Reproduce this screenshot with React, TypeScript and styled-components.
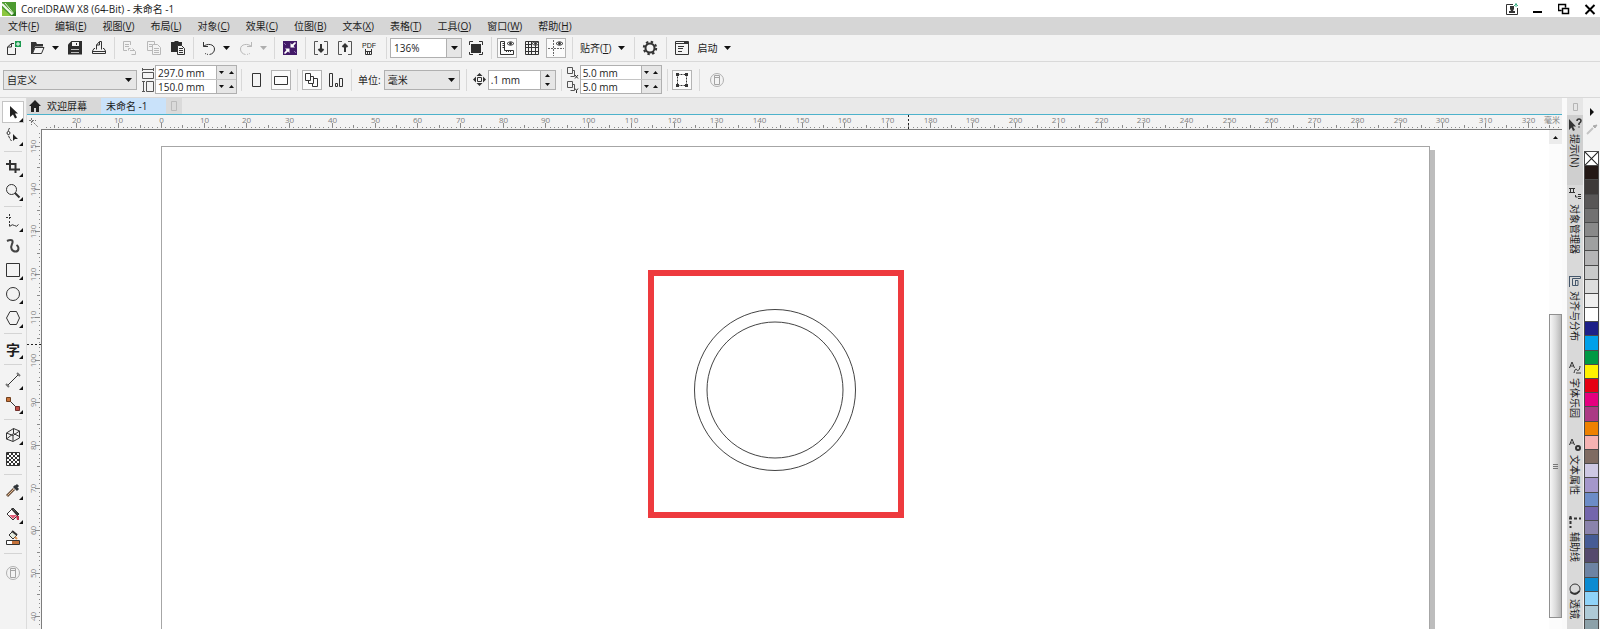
import React, { useLayoutEffect, useRef, useState } from "react";
import styled, { createGlobalStyle, css } from "styled-components";

const GlobalStyle = createGlobalStyle`
  * { box-sizing: border-box; }
  body {
    margin: 0;
    background: #f3f3f3;
    color: #1c1c1c;
    font: 10px/14px "Open Sans", "Noto Sans CJK SC", sans-serif;
  }
  button, input, select { font: inherit; color: inherit; margin: 0; padding: 0; }
  button { background: none; border: 0; }
  svg { display: block; flex: none; }
`;

/* ---------- shell ---------- */

const Shell = styled.div`
  display: flex;
  flex-direction: column;
  height: 100vh;
  overflow: hidden;
`;

const TitleBar = styled.header`
  display: flex;
  align-items: center;
  height: 17px;
  flex: none;
  padding: 0 4px 0 2px;
  background: #fff;
`;

const Title = styled.h1`
  flex: 1;
  margin: 0 0 0 5px;
  font-size: 10px;
  font-weight: 400;
`;

const WindowButtons = styled.div`
  display: flex;
  gap: 14px;
`;

const WindowButton = styled.button`
  display: flex;
  width: 12px;
  height: 14px;
  align-items: center;
  justify-content: center;
`;

const MenuBar = styled.nav`
  display: flex;
  height: 18px;
  flex: none;
  background: #d6d6d6;
`;

const MenuItem = styled.button`
  padding: 0 8px;
  white-space: nowrap;
`;

const Bar = styled.div<{ $height: number }>`
  display: flex;
  align-items: center;
  flex: none;
  height: ${(p) => p.$height}px;
  background: #f3f3f3;
  border-bottom: 1px solid #d9d9d9;
`;

const Divider = styled.span`
  width: 1px;
  height: 22px;
  flex: none;
  margin: 0 3px;
  background: #d8d8d8;
`;

const ToolButton = styled.button<{ $active?: boolean; $width?: number }>`
  display: flex;
  align-items: center;
  justify-content: center;
  flex: none;
  width: ${(p) => p.$width ?? 24}px;
  height: 20px;
  opacity: ${(p) => (p.disabled ? 0.3 : 1)};
  ${(p) =>
    p.$active &&
    css`
      background: #fbfbfb;
      border: 1px solid #b4b4b4;
    `}
`;

const TextButton = styled(ToolButton)`
  width: auto;
  gap: 7px;
  padding: 0 4px;
  white-space: nowrap;
`;

/* ---------- fields ---------- */

const SelectBox = styled.span<{ $width: number; $white?: boolean }>`
  display: grid;
  grid-template-columns: 1fr 15px;
  align-items: center;
  flex: none;
  width: ${(p) => p.$width}px;
  height: 20px;
  border: 1px solid #b0b0b0;
  background: ${(p) => (p.$white ? "#fff" : "#e6e6e6")};
  select {
    grid-area: 1 / 1 / 2 / 3;
    width: 100%;
    height: 18px;
    padding-left: 3px;
    appearance: none;
    border: 0;
    background: none;
  }
  svg {
    grid-area: 1 / 2;
    justify-self: center;
    pointer-events: none;
  }
`;

const ZoomArrow = styled.span`
  grid-area: 1 / 2;
  display: flex;
  align-items: center;
  justify-content: center;
  height: 18px;
  border-left: 1px solid #b0b0b0;
  background: #e6e6e6;
  pointer-events: none;
`;

const FieldStack = styled.div`
  display: flex;
  flex-direction: column;
  flex: none;
  border: 1px solid #b0b0b0;
`;

const FieldRow = styled.div`
  display: flex;
  height: 13px;
  & + & { border-top: 1px solid #c4c4c4; height: 14px; }
`;

const NumberInput = styled.input<{ $width: number }>`
  width: ${(p) => p.$width}px;
  height: 100%;
  padding-left: 2px;
  border: 0;
  background: #fff;
  outline: 0;
`;

const Spinner = styled.span<{ $vertical?: boolean }>`
  display: flex;
  flex-direction: ${(p) => (p.$vertical ? "column" : "row")};
  width: ${(p) => (p.$vertical ? 15 : 20)}px;
  border-left: 1px solid #b0b0b0;
  background: #e6e6e6;
  button {
    display: flex;
    flex: 1;
    align-items: center;
    justify-content: center;
  }
`;

const NudgeField = styled.div`
  display: flex;
  flex: none;
  height: 20px;
  border: 1px solid #b0b0b0;
`;

const IconStack = styled.span`
  display: flex;
  flex-direction: column;
  gap: 2px;
  flex: none;
  margin-right: 1px;
`;

const UnitLabel = styled.label`
  display: flex;
  align-items: center;
  gap: 3px;
  margin-left: 3px;
  white-space: nowrap;
`;

/* ---------- work area ---------- */

const Body = styled.div`
  display: flex;
  flex: 1;
  min-height: 0;
`;

const Toolbox = styled.aside`
  display: flex;
  flex-direction: column;
  align-items: center;
  flex: none;
  width: 26px;
  padding: 2px 0;
`;

const Tool = styled.button<{ $active?: boolean }>`
  position: relative;
  display: flex;
  align-items: center;
  justify-content: center;
  flex: none;
  width: 20px;
  height: 20px;
  margin: 2px 0;
  outline: ${(p) => (p.$active ? "1px solid #c4c4c4" : "0")};
  background: ${(p) => (p.$active ? "#fff" : "none")};
`;

const Flyout = styled.span`
  position: absolute;
  right: 0;
  bottom: 0;
  border: 2px solid #111;
  border-top-color: transparent;
  border-left-color: transparent;
`;

const ToolDivider = styled.span`
  width: 18px;
  height: 1px;
  margin: 3px 0;
  flex: none;
  background: #d4d4d4;
`;

const AddTool = styled.button`
  display: flex;
  flex: none;
  align-items: center;
  height: 32px;
`;

const Workspace = styled.main`
  display: flex;
  flex: 1;
  flex-direction: column;
  min-width: 0;
  border-left: 1px solid #dcdcdc;
`;

const Tabs = styled.div`
  display: flex;
  flex: none;
  height: 17px;
  background: #e9e9e9;
  border-bottom: 1px solid #4db2cb;
`;

const Tab = styled.button<{ $active?: boolean }>`
  display: flex;
  align-items: center;
  gap: 6px;
  padding: 0 ${(p) => (p.$active ? 18 : 14)}px 0 ${(p) => (p.$active ? 5 : 2)}px;
  background: ${(p) => (p.$active ? "#c9e2fa" : "#d8d8d8")};
  white-space: nowrap;
`;

const NewTab = styled.button`
  display: flex;
  align-items: center;
  justify-content: center;
  width: 16px;
  background: #dadada;
`;

const Desk = styled.div`
  display: grid;
  flex: 1;
  grid-template-columns: 14px 1fr 13px;
  grid-template-rows: 15px 1fr;
  min-height: 0;
`;

const Corner = styled.span`
  display: flex;
  align-items: center;
  justify-content: center;
`;

const RulerTop = styled.div`
  grid-column: 2 / 4;
  overflow: hidden;
  border-bottom: 1px solid #7d7d7d;
`;

const RulerLeft = styled.div`
  min-height: 0;
  overflow: hidden;
`;

const RulerSvg = styled.svg`
  font-size: 8px;
  fill: #808080;
  line { stroke: #8a8a8a; shape-rendering: crispEdges; }
`;

const Canvas = styled.div`
  position: relative;
  overflow: hidden;
  background: #fff;
  border-left: 1px solid #7d7d7d;
`;

const Page = styled.div`
  position: absolute;
  left: 119px;
  top: 16px;
  width: 1269px;
  height: 641px;
  background: #fff;
  border: 1px solid #a6a6a6;
  box-shadow: 5px 4px 0 #bdbdbd;
`;

const Highlight = styled.div`
  position: absolute;
  left: 606px;
  top: 140px;
  width: 256px;
  height: 248px;
  border: 6px solid #ee3a3e;
`;

const Rings = styled.svg`
  position: absolute;
  left: 651px;
  top: 178px;
`;

const ScrollTrack = styled.div`
  display: flex;
  flex-direction: column;
  padding-bottom: 11px;
  background: #fcfcfc;
`;

const ScrollUp = styled.button`
  display: flex;
  align-items: center;
  justify-content: center;
  height: 14px;
  margin-bottom: 170px;
  background: #ececec;
`;

const ScrollThumb = styled.div`
  display: flex;
  flex: 1;
  align-items: center;
  justify-content: center;
  border: 1px solid #909090;
  background: linear-gradient(90deg, #f6f6f6, #dcdcdc 50%, #b9b9b9);
`;

/* ---------- right side ---------- */

const Dockers = styled.aside`
  display: flex;
  flex-direction: column;
  flex: none;
  width: 21px;
  overflow: hidden;
  border-left: 5px solid #fafafa;
  background: #d9d9d9;
`;

const DockerAdd = styled.button`
  display: flex;
  flex: none;
  align-items: center;
  justify-content: center;
  height: 17px;
  background: #e6e6e6;
`;

const DockerTab = styled.button<{ $active?: boolean }>`
  display: flex;
  flex: none;
  align-items: center;
  gap: 3px;
  width: 16px;
  padding: 2px 0 18px;
  writing-mode: vertical-rl;
  text-orientation: sideways;
  white-space: nowrap;
  background: ${(p) => (p.$active ? "#cfcfcf" : "#d9d9d9")};
`;

const Palette = styled.aside`
  display: flex;
  flex-direction: column;
  flex: none;
  width: 17px;
  padding: 0 1px;
`;

const PaletteHead = styled.div`
  display: flex;
  flex-direction: column;
  align-items: center;
  flex: none;
  gap: 7px;
  height: 53px;
  padding-top: 10px;
`;

const Swatch = styled.button<{ $color: string }>`
  flex: 1;
  min-height: 0;
  border: 1px solid #4a4a4a;
  border-bottom: 0;
  background: ${(p) => p.$color};
  &:last-child { flex: 0 0 10px; }
  svg { width: 100%; height: 100%; }
`;

/* ---------- icons ---------- */

type IconProps = { w?: number; h?: number; children: React.ReactNode };
const Icon = ({ w = 16, h = 16, children }: IconProps) => (
  <svg width={w} height={h} viewBox={`0 0 ${w} ${h}`} fill="none" stroke="#333" aria-hidden="true">
    {children}
  </svg>
);

const Down = () => (
  <svg width="7" height="4" viewBox="0 0 7 4" aria-hidden="true"><path d="M0 0h7L3.500 4z" fill="#111" /></svg>
);
const TinyDown = () => (
  <svg width="5" height="3" viewBox="0 0 5 3" aria-hidden="true"><path d="M0 0h5L2.500 3z" fill="#111" /></svg>
);
const TinyUp = () => (
  <svg width="5" height="3" viewBox="0 0 5 3" aria-hidden="true"><path d="M0 3h5L2.500 0z" fill="#111" /></svg>
);

const Logo = () => (
  <Icon w={14} h={14}>
    <path d="M0 0h14v14H0z" fill="#4d9b31" stroke="none" />
    <path d="M0 6l9 8H0z" fill="#8cc63f" stroke="none" />
    <path d="M0 2l12 12" stroke="#f4faef" strokeWidth="2" />
    <path d="M3 1l9 11" stroke="#e4f2d8" />
    <path d="M14 9v5H9z" fill="#2f7d20" stroke="none" />
  </Icon>
);

const NewIcon = () => (
  <Icon>
    <path d="M8 3.500H5.500L1.500 7v7.500h8V8M5.500 3.500V7h-4" />
    <path d="M9 1h6v6H9z" fill="#1d9a50" stroke="none" />
    <path d="M12 2v4M10 4h4" stroke="#fff" />
  </Icon>
);
const OpenIcon = () => (
  <Icon>
    <path d="M2.500 13.500L5 7.500h9L11.500 13.500z" />
    <path d="M1 2h5l1 2h6v2.500H5L2.500 14H1z" fill="#333" stroke="none" />
  </Icon>
);
const SaveIcon = () => (
  <Icon>
    <path d="M4.500 1H15v13.500H1v-10z" fill="#2d2d2d" stroke="none" />
    <path d="M5 2h7v4H5z" fill="#f3f3f3" stroke="none" />
    <path d="M9.500 3v2" />
    <path d="M4 9.500h8M4 12.500h8" stroke="#bbb" />
  </Icon>
);
const PrintIcon = () => (
  <Icon>
    <path d="M5.500 9.500V5l3-3.500h2v8M8.500 2v3h-3M4 8.500H3L1.500 11v2.500h13V11L13 8.500h-1M2 11.500h12" />
  </Icon>
);
const CutIcon = () => (
  <Icon>
    <path d="M8.500 5V1.500h-7v9H5M3 4.500h4M3 6.500h4M8.500 8.500h-2v2M8 10.500h4M10.500 8.500l3 3v3h-4" />
  </Icon>
);
const CopyIcon = () => (
  <Icon>
    <path d="M6 10.500H1.500v-9h7V4M3 4.500h3M3 6.500h3M6.500 4.500h5l3 3v7h-8zM8 8.500h5M8 10.500h5M8 12.500h5" />
  </Icon>
);
const PasteIcon = () => (
  <Icon>
    <path d="M1 2h3l1-1h3l1 1h3v10H1z" fill="#2d2d2d" stroke="none" />
    <path d="M7.500 5.500h4l3 3v6h-7z" fill="#f3f3f3" />
    <path d="M9 8.500h4M9 10.500h4M9 12.500h4" />
  </Icon>
);
const UndoIcon = ({ flip }: { flip?: boolean }) => (
  <Icon>
    <g transform={flip ? "matrix(-1 0 0 1 16 0)" : undefined}>
      <path d="M2.500 6.500C6 3 13.500 4 13.500 9c0 3-2 5-5 5.500" />
      <path d="M7 14.500l-3-1" strokeDasharray="1 1" />
      <path d="M2.500 2v4.500H7" />
    </g>
  </Icon>
);
const SearchContentIcon = () => (
  <Icon>
    <path d="M1 1h14v14H1z" fill="#431a68" stroke="none" />
    <path d="M8.500 7.500V3l1.500 1.500L13 2l1 1-2.500 3L13 7.500zM7.500 8.500V13L6 11.500 3 14l-1-1 2.500-3L3 8.500z" fill="#fff" stroke="none" />
    <path d="M2 3l2 2M12 11l2 2" stroke="#8d6bb0" />
  </Icon>
);
const ImportIcon = ({ up }: { up?: boolean }) => (
  <Icon>
    <path d="M5 1.500H1.500v13H5M11 1.500h3.500v13H11" stroke="#555" />
    <path d={up ? "M8 12V5M5.500 7L8 4.500 10.500 7" : "M8 4v7M5.500 9L8 11.500 10.500 9"} strokeWidth="2" />
  </Icon>
);
const PdfMark = styled.span`
  display: flex;
  flex-direction: column;
  align-items: center;
  font: 7px/7px "Liberation Sans", sans-serif;
`;
const FullScreenIcon = () => (
  <Icon>
    <path d="M3 4h10v9H3z" fill="#2d2d2d" stroke="none" />
    <path d="M1.500 5V1.500H5M11 1.500h3.500V5M14.500 12v2.500H11M5 14.500H1.500V12" />
  </Icon>
);
const Eye = () => (
  <>
    <path d="M8 3.500Q11.500 0 15 3.500 11.500 7 8 3.500z" fill="#fff" />
    <circle cx="11.500" cy="3.500" r="1" fill="#333" />
  </>
);
const RulersIcon = () => (
  <Icon>
    <path d="M1.500 1.500h4v9h9v4h-13zM3.500 3.500h2M3.500 5.500h2M3.500 7.500h2M7.500 12v-2M9.500 12v-2M11.500 12v-2" />
    <Eye />
  </Icon>
);
const GridIcon = () => (
  <Icon>
    <path d="M1.500 1.500h13v13h-13zM4.500 1v14M7.500 1v14M11.500 5v10M1 4.500h7M1 7.500h14M1 11.500h14" />
    <Eye />
  </Icon>
);
const GuidesIcon = () => (
  <Icon>
    <path d="M0 8.500h16M5.500 0v16" stroke="#666" strokeDasharray="2 1" />
    <Eye />
  </Icon>
);
const GearIcon = () => (
  <Icon>
    <circle cx="8" cy="8" r="4.500" strokeWidth="2" />
    <circle cx="8" cy="8" r="6.200" strokeWidth="2" strokeDasharray="2.400 2.470" />
  </Icon>
);
const LaunchIcon = () => (
  <Icon>
    <path d="M1.500 1.500h13v13h-13zM2 3.500h12M4 6.500h6M4 8.500h5M4 11.500h4M10 2.500h4" />
  </Icon>
);
const WidthIcon = () => (
  <Icon w={12} h={11}><path d="M.5 1.500h11M.5 0v3M11.500 0v3M.5 4.500h11v6H.5z" stroke="#555" /></Icon>
);
const HeightIcon = () => (
  <Icon w={12} h={11}><path d="M1.500.5v10M0 .5h3M0 10.500h3M4.500.5h7v10h-7z" stroke="#555" /></Icon>
);
const PortraitIcon = () => <Icon><path d="M3.500 1.500h8v13h-8z" /></Icon>;
const LandscapeIcon = () => <Icon><path d="M1.500 4.500h13v8h-13z" /></Icon>;
const PagesIcon = () => (
  <Icon><path d="M1.500 1.500h5v7h-5zM6.500 4.500h3v7h-5v-3M9.500 6.500h4v8h-5v-3" /></Icon>
);
const CurrentPageIcon = () => (
  <Icon><path d="M1.500 1.500h3v13h-3zM7.500 11.500h2v3h-2zM11.500 6.500h3v8h-3z" /></Icon>
);
const NudgeIcon = () => (
  <Icon w={13} h={13}>
    <path d="M4.500 4.500h4v4h-4z" />
    <path d="M6.500 0l3 3h-6zM6.500 13l3-3h-6zM0 6.500l3-3v6zM13 6.500l-3-3v6z" fill="#333" stroke="none" />
  </Icon>
);
const DuplicateIcon = ({ axis }: { axis: "x" | "y" }) => (
  <Icon w={12} h={12}>
    <path d="M.5.5h5v6h-5zM5.500 3.500h2v6h-4" stroke="#555" />
    <path d={axis === "x" ? "M8 8l3 3.500M11 8l-3 3.500" : "M8 7.500l1.500 2 1.500-2M9.500 9.500V12"} />
  </Icon>
);
const TreatFilledIcon = () => (
  <Icon>
    <path d="M3.500 2.500h9v11h-9z" strokeDasharray="2 1" />
    <path d="M2 1h3v3H2zM11 1h3v3h-3zM2 12h3v3H2zM11 12h3v3h-3z" fill="#333" stroke="none" />
  </Icon>
);
const AddCircleIcon = () => (
  <Icon>
    <circle cx="8" cy="8" r="6.500" stroke="#b0b0b0" />
    <path d="M5.500 3.500h5v9h-5zM5.500 5.500h5" stroke="#a4a4a4" />
  </Icon>
);

const toolIcons: Record<string, React.ReactNode> = {
  pick: <path d="M5 2v11l3-2.500 2 4 2-1-2-4h3z" fill="#222" stroke="none" />,
  shape: (
    <>
      <path d="M4.500 0c-3 5-1 9 2 13" strokeDasharray="3 1" />
      <circle cx="3.500" cy="5" r="1.500" fill="#fff" />
      <path d="M8 6v7l2-2h3z" fill="#222" stroke="none" />
    </>
  ),
  crop: <path d="M1 5h9.500v9M5 1v9.500h10" strokeWidth="2" />,
  zoom: <><circle cx="6.500" cy="6.500" r="5" /><path d="M10 10l4.500 4.500" strokeWidth="2" /></>,
  freehand: (
    <>
      <path d="M4.500 0v6M1 3.500h6M4.500 7v5" strokeDasharray="2 1" />
      <path d="M4.500 12.500q3-3 5-1t4-1" />
    </>
  ),
  artistic: <path d="M2 3c4-2 7-1 5 3s0 7.500 3.500 7.500 4-4.500 1-6.500" strokeWidth="2" stroke="#444" />,
  rectangle: <path d="M1.500 1.500h13v13h-13z" />,
  ellipse: <circle cx="8" cy="8" r="6.500" />,
  polygon: <path d="M5 1.500h6.500l3 6.500-3 6.500H5L1.500 8z" />,
  line: (
    <>
      <path d="M3 13L13 3" />
      <path d="M1 12l3 3M12 1l3 3" strokeWidth="2" stroke="#777" />
    </>
  ),
  connector: (
    <>
      <path d="M3 3l10 10" />
      <path d="M1.500 1.500h4v4h-4z" fill="#c9743a" stroke="#70401e" />
      <path d="M10.500 10.500h4v4h-4z" fill="#c0504a" stroke="#70302c" />
    </>
  ),
  extrude: <path d="M1.500 6l7-4.500 6 2.500v7L8 14.500 1.500 12zM1.500 6L8 8.500V14M8 8.500L14.500 4M8.500 1.500v5L1.500 12M8.500 6.500l6 3" />,
  transparency: (
    <>
      <path d="M1.500 1.500h13v13h-13z" fill="#fff" />
      {[0, 1, 2, 3, 4, 5].map((row) => (
        <path key={row} d={`M${row % 2 ? 4 : 2} ${3 + row * 2}H14`} strokeWidth="2" strokeDasharray="2 2" />
      ))}
    </>
  ),
  dropper: (
    <>
      <path d="M2 14l7-7" strokeWidth="3" stroke="#6b5340" />
      <path d="M2.500 13.500L9 7" stroke="#e8bd94" />
      <path d="M9 4l4 4M11 5l2-2" strokeWidth="3" stroke="#2f3438" />
    </>
  ),
  fill: (
    <>
      <path d="M2 8l6-6 6 6-6 6z" fill="#fff" />
      <path d="M7 2l7 6-2 2-6-7z" fill="#333" stroke="none" />
      <path d="M4 9h8l-4 4z" fill="#e2607a" stroke="none" />
      <path d="M11 10h3v4h-2z" fill="#c0334d" stroke="none" />
    </>
  ),
  smart: (
    <>
      <path d="M4 5l4-4 4 4-4 4z" fill="#e5ece0" />
      <path d="M7 1l5 4" strokeWidth="2" />
      <path d="M10 7l2 2" stroke="#dd9552" strokeWidth="2" />
      <path d="M1.500 10.500h13v4h-13z" fill="#fff" />
      <path d="M7 11h7v3H7z" fill="#c5723b" stroke="none" />
    </>
  ),
};

const TextGlyph = styled.span`
  font: 700 14px/16px "Noto Sans CJK SC", sans-serif;
`;

const toolGroups: { id: string; label: string; fly?: boolean }[][] = [
  [{ id: "pick", label: "选择", fly: true }, { id: "shape", label: "形状", fly: true }],
  [{ id: "crop", label: "裁剪", fly: true }, { id: "zoom", label: "缩放", fly: true }],
  [
    { id: "freehand", label: "手绘", fly: true },
    { id: "artistic", label: "艺术笔" },
    { id: "rectangle", label: "矩形", fly: true },
    { id: "ellipse", label: "椭圆形", fly: true },
    { id: "polygon", label: "多边形", fly: true },
  ],
  [{ id: "text", label: "文本", fly: true }],
  [{ id: "line", label: "平行度量", fly: true }, { id: "connector", label: "连接器", fly: true }],
  [{ id: "extrude", label: "立体化", fly: true }, { id: "transparency", label: "透明度" }],
  [
    { id: "dropper", label: "颜色滴管", fly: true },
    { id: "fill", label: "交互式填充", fly: true },
    { id: "smart", label: "智能填充" },
  ],
];

const dockers: { label: string; icon: React.ReactNode }[] = [
  {
    label: "提示(N)",
    icon: (
      <>
        <path d="M1 2v11l2.500-2.500L5 14l2-1-2-3.500h3z" fill="#333" stroke="none" />
        <path d="M9 4q0-2 2-2t2 2q0 1-2 2.500V8M11 9.500v1" strokeWidth="1.500" />
      </>
    ),
  },
  {
    label: "对象管理器",
    icon: <path d="M1 1.500h6M1 5.500h6M2.500 1v5M5.500 1v5M7.500 8v2h2M10 7.500h3M10 9.500h3M10 11.500h3" />,
  },
  { label: "对齐与分布", icon: <path d="M1.500 2v11M1 2.500h11.500v2H4.500v7h3V6M8 6.500h2v5H7" stroke="#45576b" /> },
  { label: "字体乐园", icon: <path d="M1.500 7L4 1l2.500 6M2.500 5h3M6 12c1-4 2-5 3-3s3-1 3-4M8 12h5" /> },
  {
    label: "文本属性",
    icon: <><path d="M1.500 7L4 1l2.500 6M2.500 5h3" /><circle cx="10" cy="10" r="2" strokeWidth="2" /></>,
  },
  { label: "辅助线", icon: <path d="M2.500 1v12M1 3.500h12" strokeWidth="2" strokeDasharray="3 2" /> },
  { label: "透镜", icon: <><circle cx="7" cy="7" r="5" /><path d="M2.500 10q5 4 9-1" strokeWidth="2" /></> },
];

const swatches = [
  "#fff", "#231815", "#3e3a39", "#595757", "#727171", "#898989", "#9fa0a0", "#b5b5b6", "#c9caca",
  "#dcdddd", "#efefef", "#ffffff", "#1d2088", "#00a0e9", "#009944", "#fff100", "#e60012", "#e4007f",
  "#ab3a84", "#ee8100", "#f5b2b2", "#7f6b62", "#cdc8e3", "#a497cb", "#6c8cc7", "#7466ac", "#8a83ac",
  "#465c95", "#554a6d", "#6d83a3", "#0b8bd2", "#8fd3f8", "#aecad6", "#8ca1a9",
];

const menus = [
  ["文件", "F"], ["编辑", "E"], ["视图", "V"], ["布局", "L"], ["对象", "C"], ["效果", "C"],
  ["位图", "B"], ["文本", "X"], ["表格", "T"], ["工具", "O"], ["窗口", "W"], ["帮助", "H"],
];

/* ---------- rulers ---------- */

const PX_PER_MM = 4.271;
const ORIGIN_X = 120;
const TOP_MM = 150;
const TOP_Y = 17;

const tickLength = (mm: number) => (mm % 10 === 0 ? 5 : mm % 5 === 0 ? 3 : 1);

/* Tracks the size of a ruler's box, so that only visible marks are drawn. */
function useBoxSize() {
  const ref = useRef<HTMLDivElement>(null);
  const [size, setSize] = useState({ width: 0, height: 0 });
  useLayoutEffect(() => {
    const measure = () => {
      if (ref.current) setSize({ width: ref.current.clientWidth, height: ref.current.clientHeight });
    };
    measure();
    window.addEventListener("resize", measure);
    return () => window.removeEventListener("resize", measure);
  }, []);
  return [ref, size] as const;
}

const HorizontalRuler = () => {
  const [ref, { width }] = useBoxSize();
  const count = Math.max(0, Math.floor((width - ORIGIN_X) / PX_PER_MM) + 28);
  const marks = Array.from({ length: count }, (_, i) => i - 27);
  return (
    <RulerTop ref={ref}>
      <RulerSvg width="100%" height="14">
        {marks.map((mm) => {
          const x = Math.round(ORIGIN_X + mm * PX_PER_MM) + 0.5;
          return (
            <g key={mm}>
              <line x1={x} x2={x} y1={13 - tickLength(mm)} y2={13} />
              {mm % 10 === 0 && <text x={x} y={8} textAnchor="middle">{Math.abs(mm)}</text>}
            </g>
          );
        })}
        <path d="M867.500 0v14" stroke="#222" strokeDasharray="2 2" />
        <text x="100%" y={8} dx={-2} textAnchor="end">毫米</text>
      </RulerSvg>
    </RulerTop>
  );
};

const VerticalRuler = () => {
  const [ref, { height }] = useBoxSize();
  const count = Math.max(0, Math.floor((height - TOP_Y) / PX_PER_MM) + 4);
  const marks = Array.from({ length: count }, (_, i) => TOP_MM + 3 - i);
  return (
    <RulerLeft ref={ref}>
      <RulerSvg width="14" height="100%">
        {marks.map((mm) => {
          const y = Math.round(TOP_Y + (TOP_MM - mm) * PX_PER_MM) - 0.5;
          return (
            <g key={mm}>
              <line x1={13 - tickLength(mm)} x2={13} y1={y} y2={y} />
              {mm % 10 === 0 && (
                <text transform={`translate(9 ${y}) rotate(-90)`} textAnchor="middle">{Math.abs(mm)}</text>
              )}
            </g>
          );
        })}
        <path d="M0 214.500h14" stroke="#222" strokeDasharray="2 2" />
      </RulerSvg>
    </RulerLeft>
  );
};

/* ---------- composed controls ---------- */

const PairSpinner = () => (
  <Spinner>
    <button aria-label="减小"><TinyDown /></button>
    <button aria-label="增大"><TinyUp /></button>
  </Spinner>
);

const PairField = ({ labels, values, width }: { labels: string[]; values: string[]; width: number }) => (
  <FieldStack>
    {labels.map((label, i) => (
      <FieldRow key={label}>
        <NumberInput $width={width} aria-label={label} defaultValue={values[i]} />
        <PairSpinner />
      </FieldRow>
    ))}
  </FieldStack>
);

const Gap = styled.span<{ $w: number }>`
  width: ${(p) => p.$w}px;
  flex: none;
`;

export default function App() {
  return (
    <Shell>
      <GlobalStyle />
      <TitleBar>
        <Logo />
        <Title>CorelDRAW X8 (64-Bit) - 未命名 -1</Title>
        <WindowButtons>
          <WindowButton aria-label="登录">
            <Icon w={12} h={14}>
              <path d="M7 2.500H.5v10h11V6" />
              <path d="M4 4h4v3L7 9h2v2H3V9h2L4 7z" fill="#333" stroke="none" />
              <path d="M8 4l2-2 2 2M10 1v4" stroke="#3fae86" />
            </Icon>
          </WindowButton>
          <WindowButton aria-label="最小化">
            <Icon w={12} h={14}><path d="M1 10h9" strokeWidth="2" stroke="#000" /></Icon>
          </WindowButton>
          <WindowButton aria-label="还原">
            <Icon w={12} h={14}>
              <path d="M3.500 8.500h-3v-6h7v3M4.500 6.500h6v5h-6z" stroke="#000" strokeWidth="1.500" />
            </Icon>
          </WindowButton>
          <WindowButton aria-label="关闭">
            <Icon w={12} h={14}><path d="M1.500 3l9 9M10.500 3l-9 9" strokeWidth="2" stroke="#000" /></Icon>
          </WindowButton>
        </WindowButtons>
      </TitleBar>

      <MenuBar>
        {menus.map(([name, key]) => (
          <MenuItem key={name}>{name}(<u>{key}</u>)</MenuItem>
        ))}
      </MenuBar>

      <Bar $height={27}>
        <Gap $w={2} />
        <ToolButton aria-label="新建"><NewIcon /></ToolButton>
        <ToolButton aria-label="打开"><OpenIcon /></ToolButton>
        <ToolButton $width={10} aria-label="最近文件"><Down /></ToolButton>
        <Gap $w={3} />
        <ToolButton aria-label="保存"><SaveIcon /></ToolButton>
        <ToolButton aria-label="打印"><PrintIcon /></ToolButton>
        <Divider />
        <ToolButton disabled aria-label="剪切"><CutIcon /></ToolButton>
        <ToolButton disabled aria-label="复制"><CopyIcon /></ToolButton>
        <ToolButton aria-label="粘贴"><PasteIcon /></ToolButton>
        <Divider />
        <ToolButton aria-label="撤消"><UndoIcon /></ToolButton>
        <ToolButton $width={10} aria-label="撤消列表"><Down /></ToolButton>
        <Gap $w={3} />
        <ToolButton disabled aria-label="重做"><UndoIcon flip /></ToolButton>
        <ToolButton disabled $width={10} aria-label="重做列表"><Down /></ToolButton>
        <Gap $w={3} />
        <Divider />
        <ToolButton aria-label="搜索内容"><SearchContentIcon /></ToolButton>
        <Divider />
        <ToolButton aria-label="导入"><ImportIcon /></ToolButton>
        <ToolButton aria-label="导出"><ImportIcon up /></ToolButton>
        <ToolButton aria-label="发布为 PDF">
          <PdfMark><span>PDF</span><Icon w={8} h={6}><path d="M.5 0v5.500h6V0M2.500 2v3M4.500 2v3M0 2.500h7" /></Icon></PdfMark>
        </ToolButton>
        <Gap $w={2} />
        <Divider />
        <SelectBox $width={72} $white>
          <select aria-label="缩放级别" defaultValue="136%"><option>136%</option></select>
          <ZoomArrow><Down /></ZoomArrow>
        </SelectBox>
        <Gap $w={2} />
        <ToolButton aria-label="全屏预览"><FullScreenIcon /></ToolButton>
        <Divider />
        <Gap $w={2} />
        <ToolButton $active $width={20} aria-label="显示标尺"><RulersIcon /></ToolButton>
        <Gap $w={3} />
        <ToolButton aria-label="显示网格"><GridIcon /></ToolButton>
        <Gap $w={2} />
        <ToolButton $active $width={20} aria-label="显示辅助线"><GuidesIcon /></ToolButton>
        <Gap $w={3} />
        <Divider />
        <TextButton><span>贴齐(<u>T</u>)</span><Down /></TextButton>
        <Gap $w={2} />
        <Divider />
        <ToolButton aria-label="选项"><GearIcon /></ToolButton>
        <Gap $w={1} />
        <Divider />
        <TextButton><LaunchIcon />启动<Down /></TextButton>
      </Bar>

      <Bar $height={36}>
        <Gap $w={3} />
        <SelectBox $width={134}>
          <select aria-label="页面大小" defaultValue="自定义"><option>自定义</option></select>
          <Down />
        </SelectBox>
        <Gap $w={5} />
        <IconStack><WidthIcon /><HeightIcon /></IconStack>
        <PairField labels={["页面宽度", "页面高度"]} values={["297.0 mm", "150.0 mm"]} width={60} />
        <Gap $w={1} />
        <Divider />
        <ToolButton aria-label="纵向"><PortraitIcon /></ToolButton>
        <Gap $w={2} />
        <ToolButton $active $width={20} aria-label="横向"><LandscapeIcon /></ToolButton>
        <Gap $w={3} />
        <Divider />
        <Gap $w={1} />
        <ToolButton $active $width={20} aria-label="所有页面"><PagesIcon /></ToolButton>
        <Gap $w={2} />
        <ToolButton aria-label="当前页"><CurrentPageIcon /></ToolButton>
        <Divider />
        <UnitLabel>
          单位:
          <SelectBox $width={76}>
            <select defaultValue="毫米"><option>毫米</option></select>
            <Down />
          </SelectBox>
        </UnitLabel>
        <Gap $w={3} />
        <Divider />
        <Gap $w={3} />
        <NudgeIcon />
        <Gap $w={2} />
        <NudgeField>
          <NumberInput $width={51} aria-label="微调距离" defaultValue=".1 mm" />
          <Spinner $vertical>
            <button aria-label="增大微调"><TinyUp /></button>
            <button aria-label="减小微调"><TinyDown /></button>
          </Spinner>
        </NudgeField>
        <Gap $w={2} />
        <Divider />
        <Gap $w={2} />
        <IconStack><DuplicateIcon axis="x" /><DuplicateIcon axis="y" /></IconStack>
        <PairField labels={["再制距离 X", "再制距离 Y"]} values={["5.0 mm", "5.0 mm"]} width={60} />
        <Gap $w={2} />
        <Divider />
        <Gap $w={1} />
        <ToolButton $active $width={20} aria-label="视为已填充"><TreatFilledIcon /></ToolButton>
        <Gap $w={4} />
        <Divider />
        <Gap $w={2} />
        <ToolButton aria-label="快速自定义"><AddCircleIcon /></ToolButton>
      </Bar>

      <Body>
        <Toolbox>
          {toolGroups.map((group, i) => (
            <React.Fragment key={i}>
              {group.map((tool) => (
                <Tool key={tool.id} $active={tool.id === "pick"} aria-label={tool.label}>
                  {tool.id === "text" ? <TextGlyph>字</TextGlyph> : <Icon>{toolIcons[tool.id]}</Icon>}
                  {tool.fly && <Flyout />}
                </Tool>
              ))}
              <ToolDivider />
            </React.Fragment>
          ))}
          <AddTool aria-label="自定义工具箱"><AddCircleIcon /></AddTool>
        </Toolbox>

        <Workspace>
          <Tabs>
            <Tab>
              <Icon w={12} h={12}><path d="M6 0L0 6h2v6h3V8h2v4h3V6h2z" fill="#222" stroke="none" /></Icon>
              欢迎屏幕
            </Tab>
            <Tab $active>未命名 -1</Tab>
            <NewTab aria-label="新建标签"><Icon w={8} h={10}><path d="M1.500.5h5v9h-5z" stroke="#bbb" /></Icon></NewTab>
          </Tabs>
          <Desk>
            <Corner>
              <Icon w={10} h={10}><path d="M2.500 0v7M0 2.500h7M3 3l6 6" stroke="#777" strokeDasharray="2 1" /></Icon>
            </Corner>
            <HorizontalRuler />
            <VerticalRuler />
            <Canvas>
              <Page />
              <Rings width="164" height="164" fill="none" stroke="#444">
                <circle cx="82" cy="82" r="80.500" />
                <circle cx="82" cy="82" r="68" />
              </Rings>
              <Highlight />
            </Canvas>
            <ScrollTrack>
              <ScrollUp aria-label="向上滚动"><TinyUp /></ScrollUp>
              <ScrollThumb><Icon w={5} h={7}><path d="M0 1.500h5M0 3.500h5M0 5.500h5" stroke="#777" /></Icon></ScrollThumb>
            </ScrollTrack>
          </Desk>
        </Workspace>

        <Dockers>
          <DockerAdd aria-label="添加泊坞窗"><Icon w={7} h={10}><path d="M1.500 1.500h4v7h-4z" stroke="#b5b5b5" /></Icon></DockerAdd>
          {dockers.map((d, i) => (
            <DockerTab key={d.label} $active={i === 0}>
              <Icon w={14} h={14}>{d.icon}</Icon>
              {d.label}
            </DockerTab>
          ))}
        </Dockers>

        <Palette>
          <PaletteHead>
            <Icon w={5} h={8}><path d="M1 0v8l4-4z" fill="#111" stroke="none" /></Icon>
            <Icon w={12} h={12}><path d="M1 11l6-6" stroke="#c4c4c4" strokeWidth="2" /><path d="M7 3l2 2 2-3z" fill="#aaa" stroke="#aaa" /></Icon>
          </PaletteHead>
          {swatches.map((color, i) => (
            <Swatch key={i} $color={color} aria-label={i === 0 ? "无填充" : color}>
              {i === 0 && <svg viewBox="0 0 12 12" preserveAspectRatio="none" stroke="#222"><path d="M0 0l12 12M12 0L0 12" /></svg>}
            </Swatch>
          ))}
        </Palette>
      </Body>
    </Shell>
  );
}
